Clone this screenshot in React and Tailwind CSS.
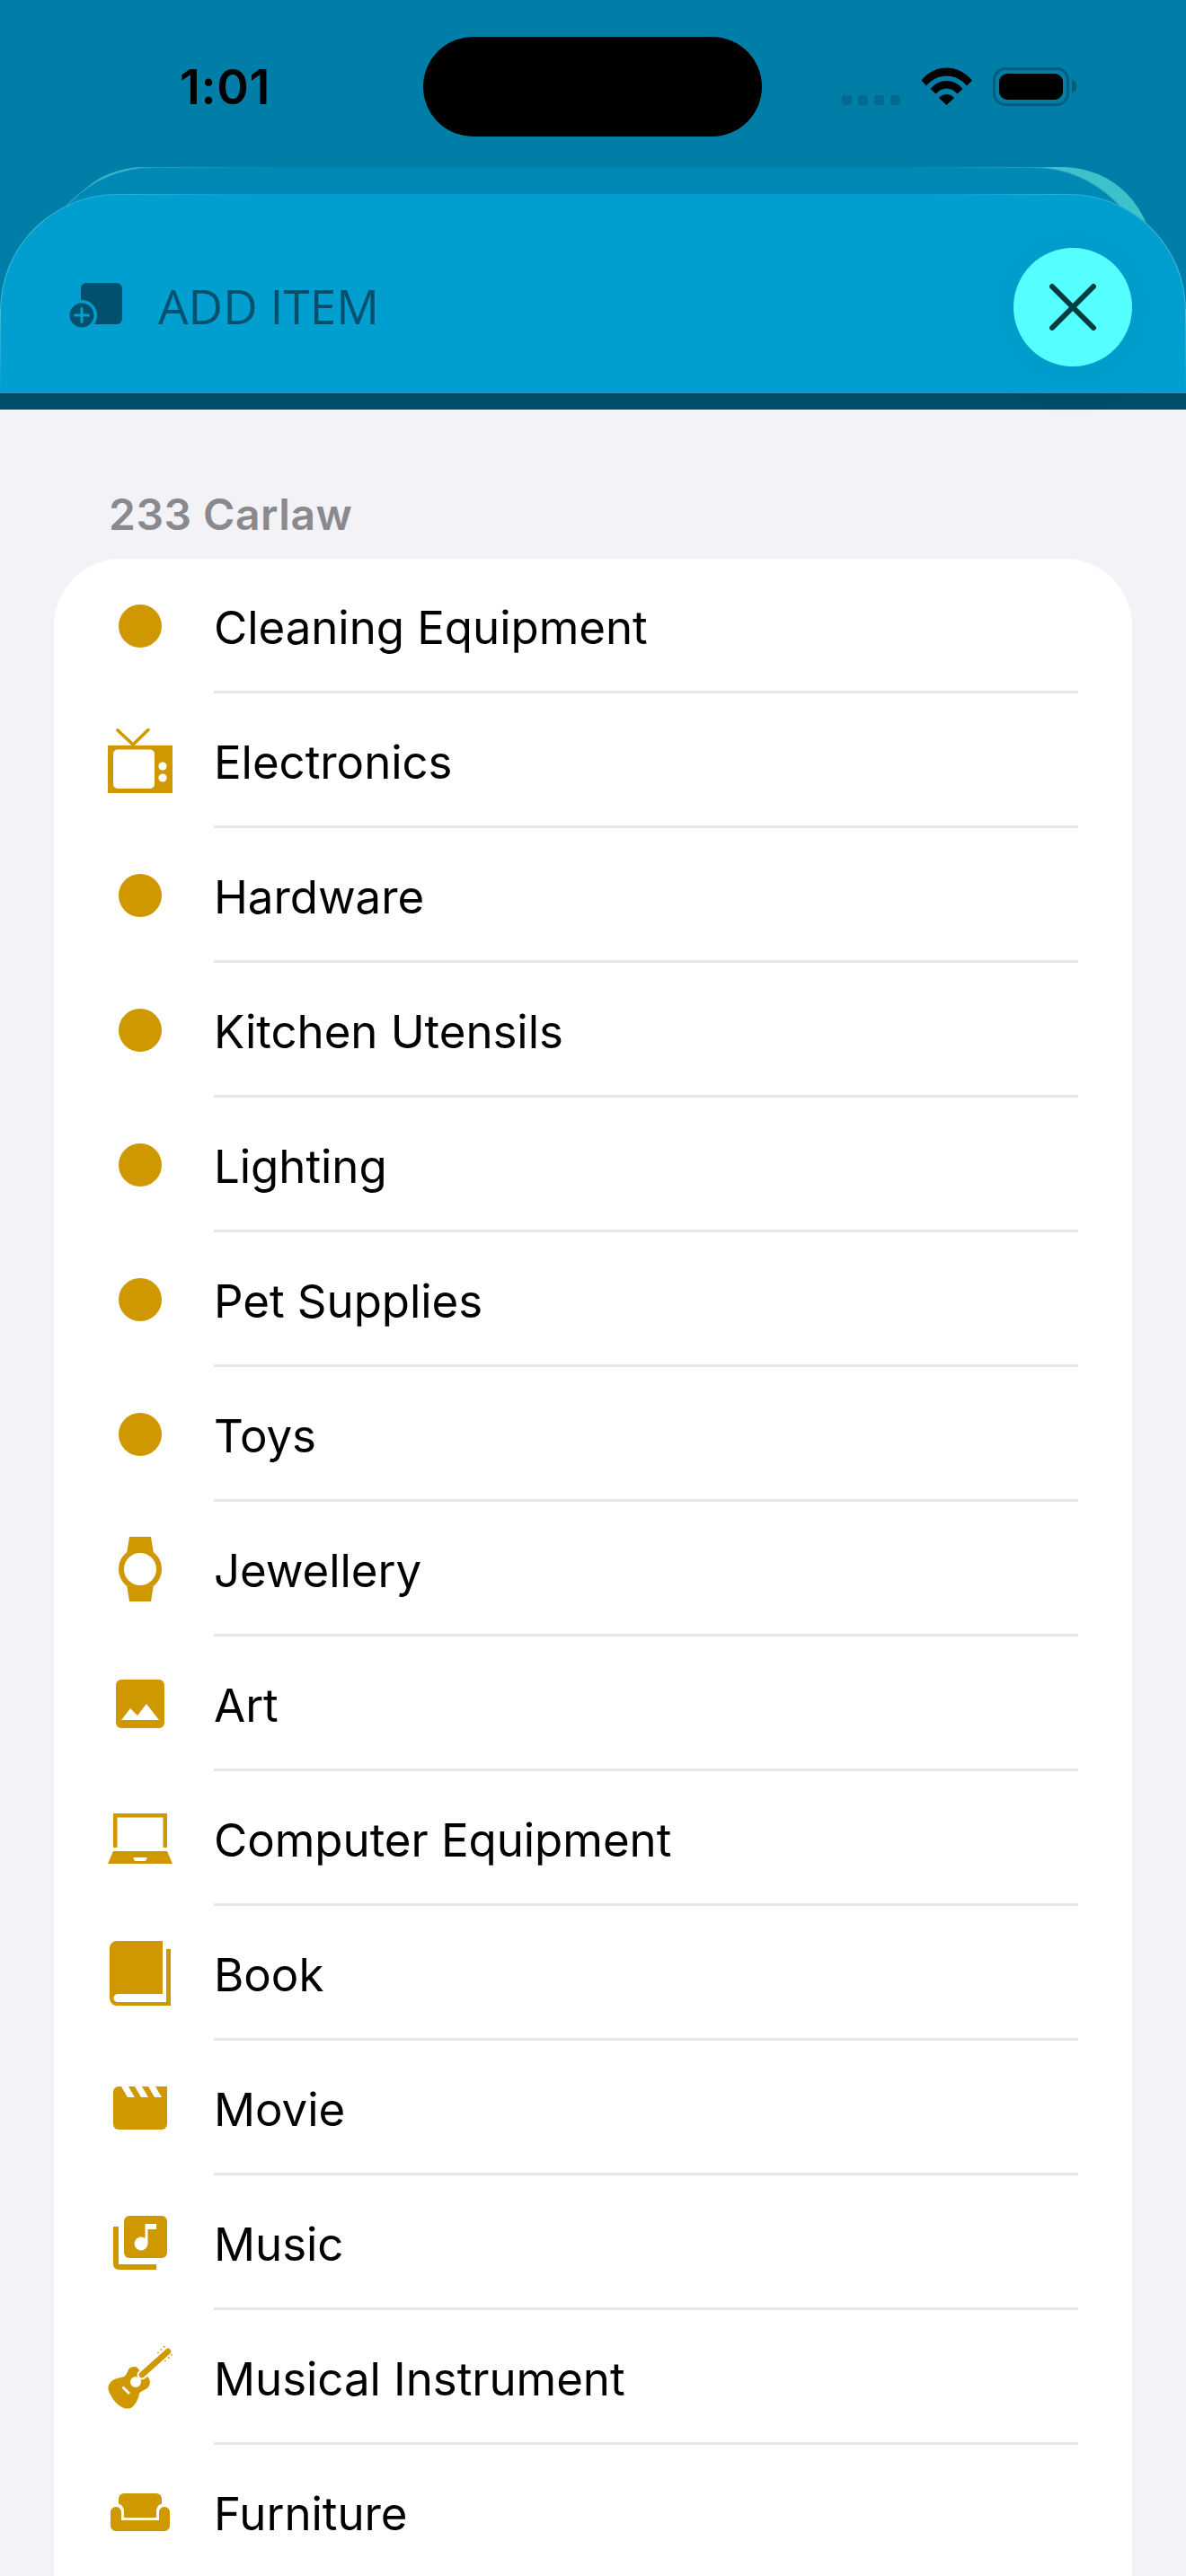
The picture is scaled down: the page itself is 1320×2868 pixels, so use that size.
import React from "react";

const gold = "#cf9800";

const Dot = () => (
  <svg width="72" height="72" viewBox="0 0 72 72"><circle cx="36" cy="36" r="24" fill={gold} /></svg>
);
const Tv = () => (
  <svg width="72" height="72" viewBox="0 0 72 72">
    <path d="M11 2 L28 18 L45 1.500" fill="none" stroke={gold} strokeWidth="3.6" strokeLinecap="round" strokeLinejoin="round" />
    <path fillRule="evenodd" fill={gold} d="M0 19H72V72H0Z M11 23.500 a5 5 0 0 0 -5 5 V62 a5 5 0 0 0 5 5 H47 a5 5 0 0 0 5 -5 V28.500 a5 5 0 0 0 -5 -5Z" />
    <circle cx="61" cy="42" r="4.600" fill="#fff" />
    <circle cx="61" cy="55" r="4.600" fill="#fff" />
  </svg>
);
const Watch = () => (
  <svg width="72" height="72" viewBox="0 0 72 72">
    <path fill={gold} d="M24 0H48L51 19H21Z M21 53H51L48 72H24Z" />
    <circle cx="36" cy="36" r="21" fill="#fff" stroke={gold} strokeWidth="6" />
  </svg>
);
const Art = () => (
  <svg width="72" height="72" viewBox="0 0 72 72">
    <rect x="9" y="9" width="54" height="54" rx="6" fill={gold} />
    <path fill="#fff" d="M15 54 L25 41 L33 49 L43 36 L57 54Z" />
  </svg>
);
const Laptop = () => (
  <svg width="72" height="72" viewBox="0 0 72 72">
    <path fill={gold} d="M6 8H66V46H61.500V12.500H10.500V46H6Z" />
    <path fill={gold} fillRule="evenodd" d="M6 50H66L72 64H0Z M28 57H44L42 61H30Z" />
  </svg>
);
const Book = () => (
  <svg width="72" height="72" viewBox="0 0 72 72">
    <path fill={gold} d="M2 8a8 8 0 0 1 8-8H61V59H11a4.500 4.500 0 0 0 0 9H65V9H70V72H10a8 8 0 0 1-8-8Z" />
  </svg>
);
const Movie = () => (
  <svg width="72" height="72" viewBox="0 0 72 72">
    <path fill={gold} d="M12 12H66V54a6 6 0 0 1-6 6H12a6 6 0 0 1-6-6V18a6 6 0 0 1 6-6Z" />
    <path fill="#fff" d="M15 12H23L30 24H22Z M30 12H38L45 24H37Z M45 12H53L60 24H52Z" />
  </svg>
);
const Music = () => (
  <svg width="72" height="72" viewBox="0 0 72 72">
    <path fill={gold} d="M6 18H12V60H54V66H12a6 6 0 0 1-6-6Z" />
    <rect x="18" y="6" width="48" height="47" rx="6" fill={gold} />
    <path fill="#fff" d="M41.500 15H54V21H44.500V37a7.500 7.500 0 1 1-3-6Z" />
  </svg>
);
const Guitar = () => (
  <svg width="72" height="72" viewBox="0 0 72 72">
    <path fill={gold} fillRule="evenodd" d="M30 24C26 24 23.500 25.500 22.500 28C21.500 31 20.500 33.500 18 35C14 36.500 9 36.500 5 39.500C1 42.500 -0.500 47 1 51C3 57 9 65 14 68C18 71 24 71.500 27 69C31 66 34 60 35 54C36 51.500 40 50.500 43 48.500C46.500 46 47.500 42.500 46.500 38.500C45.500 35 42 33 38 32C35 30 34.500 24 30 24Z M31 35a6 6 0 1 0 0 12 6 6 0 0 0 0-12Z M15.500 47.500 17.500 45.500 25 53 23 55Z" />
    <path d="M67 7L38 33" stroke="#fff" strokeWidth="11" strokeLinecap="round" />
    <path d="M67 7L38 33" stroke={gold} strokeWidth="6.500" strokeLinecap="round" />
    <g fill={gold}>
      <circle cx="56" cy="8.300" r="0.900" /><circle cx="59.300" cy="5" r="0.900" /><circle cx="62.700" cy="2" r="0.900" />
      <circle cx="64" cy="17.300" r="0.900" /><circle cx="67.700" cy="14" r="0.900" /><circle cx="71" cy="10.700" r="0.900" />
    </g>
  </svg>
);
const Sofa = () => (
  <svg width="72" height="72" viewBox="0 0 72 72">
    <path fill={gold} d="M18 15H54a6 6 0 0 1 6 6V26.500C56.500 27.500 54 31 54 35V42H18V35C18 31 15.500 27.500 12 26.500V21a6 6 0 0 1 6-6Z" />
    <path fill={gold} d="M3 36a6 6 0 0 1 12 0V45H57V36a6 6 0 0 1 12 0V51a6 6 0 0 1-6 6H9a6 6 0 0 1-6-6Z" />
  </svg>
);

const rows = [
  ["Cleaning Equipment", Dot],
  ["Electronics", Tv],
  ["Hardware", Dot],
  ["Kitchen Utensils", Dot],
  ["Lighting", Dot],
  ["Pet Supplies", Dot],
  ["Toys", Dot],
  ["Jewellery", Watch],
  ["Art", Art],
  ["Computer Equipment", Laptop],
  ["Book", Book],
  ["Movie", Movie],
  ["Music", Music],
  ["Musical Instrument", Guitar],
  ["Furniture", Sofa],
];

const edgeMask =
  "[mask-image:linear-gradient(to_right,black,transparent_22%,transparent_78%,black),linear-gradient(to_bottom,black_55%,transparent)] [mask-composite:intersect]";

export default function App() {
  return (
    <div className="h-[2868px] w-[1320px] overflow-hidden bg-[#f2f2f7] font-['Inter',sans-serif] text-black">
      <header className="relative h-[456px] bg-[#007ea8]">
        {/* status bar */}
        <div className="relative z-10 flex h-[186px] items-start">
          <div className="mt-[67px] w-[471px] pl-[200px] text-[54px] font-semibold leading-[60px] tracking-[0.6px]">1:01</div>
          <div className="mt-[41px] h-[111px] w-[377px] rounded-full bg-black" />
          <div className="ml-[89px] mt-[75px] flex items-start">
            <div className="mt-[31px] flex gap-[7px]">
              <span className="h-[11px] w-[11px] rounded-[3px] bg-[#006a90]" />
              <span className="h-[11px] w-[11px] rounded-[3px] bg-[#006a90]" />
              <span className="h-[11px] w-[11px] rounded-[3px] bg-[#006a90]" />
              <span className="h-[11px] w-[11px] rounded-[3px] bg-[#006a90]" />
            </div>
            <svg className="ml-[23px]" width="58" height="42" viewBox="0 0 58 42">
              <path fill="#000" d="M0.500 14.500C8 5 18 0.500 28.500 0.500S49 5 57 14.500L51 20.500C44.500 13 37 9.500 28.500 9.500S12.500 13 6 20.500Z" />
              <path fill="#000" d="M10.500 24C15.500 18 21.500 15 28.500 15S41.500 18 46.500 24L40.500 29.500C37 25.500 33 23.500 28.500 23.500S20 25.500 16.500 29.500Z" />
              <path fill="#000" d="M20 34C22.500 31.500 25 30 28.500 30S34.500 31.500 37 34L28.500 42Z" />
            </svg>
            <div className="ml-[22px] flex h-[43px] w-[85px] items-center justify-center rounded-[14px] border-[3px] border-[#005d80]">
              <div className="h-[29px] w-[71px] rounded-[9px] bg-black" />
            </div>
            <div className="ml-[3px] mt-[14px] h-[14px] w-[5px] rounded-r-full bg-[#005d80]" />
          </div>
        </div>

        {/* stacked sheets behind */}
        <div className="absolute left-[60px] top-[186px] h-[150px] w-[1223px] rounded-t-[100px] bg-[#3cc3c9]" />
        <div className="absolute left-[40px] top-[186px] h-[150px] w-[1240px] rounded-t-[130px] bg-[#0089b4]">
          <div className={`absolute inset-0 rounded-t-[130px] border border-b-0 border-white/30 ${edgeMask}`} />
        </div>

        {/* front sheet */}
        <div className="absolute inset-x-0 bottom-0 top-[216px] flex flex-col">
          <div className="relative flex h-[222px] items-center rounded-t-[130px] bg-[#009fcf] pl-[75px] pr-[60px] pt-[30px]">
            <div className={`absolute inset-0 rounded-t-[130px] border border-b-0 border-white/30 ${edgeMask}`} />
            <svg width="62" height="54" viewBox="0 0 62 54">
              <rect x="15" y="0" width="46" height="46" rx="6" fill="#00506e" />
              <circle cx="16" cy="36" r="17" fill="#009fcf" />
              <circle cx="16" cy="36" r="13.500" fill="#00506e" />
              <path d="M16 28.500V43.500M8.500 36H23.500" stroke="#009fcf" strokeWidth="3" strokeLinecap="round" />
            </svg>
            <span className="ml-[39px] mt-[-2px] font-['Open_Sans',sans-serif] text-[53px] font-normal leading-[60px] tracking-[0.1px] text-[#00506e]">ADD ITEM</span>
            <div className="relative z-10 ml-auto flex h-[132px] w-[132px] items-center justify-center rounded-full bg-[#55ffff] shadow-[0_0_90px_rgba(0,0,0,0.05)]">
              <svg width="56" height="56" viewBox="0 0 56 56">
                <path d="M5 5L51 51M51 5L5 51" stroke="#003d40" strokeWidth="6" strokeLinecap="round" />
              </svg>
            </div>
          </div>
          <div className="h-[18px] border-t border-[#003a50] bg-[#004e6a]" />
        </div>
      </header>

      <main className="px-[60px]">
        <div className="ml-[61px] mt-[91px] h-[75px] text-[48px] font-semibold leading-[52px] tracking-[0.5px] text-[#8a8a8e]">233 Carlaw</div>
        <div className="rounded-t-[75px] bg-white">
          {rows.map(([label, Icon]) => (
            <div key={label} className="flex h-[150px]">
              <div className="flex w-[178px] shrink-0 items-center justify-center pl-[14px]">
                <div className="flex h-[72px] w-[72px] items-center justify-center">
                  <Icon />
                </div>
              </div>
              <div className="mr-[60px] flex flex-1 items-center border-b-[3px] border-[#e6e6e8] pt-[7px] text-[51px] leading-[60px] tracking-[-0.05px]">
                {label}
              </div>
            </div>
          ))}
        </div>
      </main>
    </div>
  );
}
